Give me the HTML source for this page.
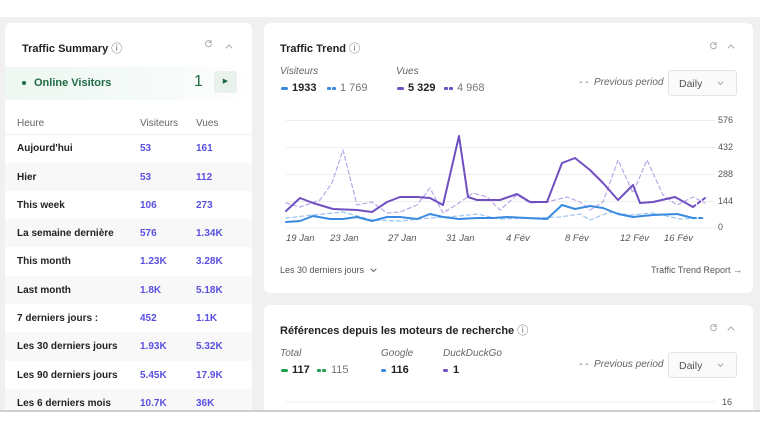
<!DOCTYPE html>
<html><head><meta charset="utf-8"><style>
*{box-sizing:border-box;margin:0;padding:0}
body{width:760px;height:427px;overflow:hidden;background:#fff;font-family:"Liberation Sans",sans-serif;position:relative}
.bg{position:absolute;left:0;top:17px;width:760px;height:393px;background:#f0f0f0;overflow:hidden}
.bl{position:absolute;left:0;top:410px;width:760px;height:2px;background:#cfcfcf}
.card{position:absolute;background:#fff;border-radius:6px}
.t{position:absolute;white-space:nowrap}
.h{font-size:11px;font-weight:bold;color:#222}
.row{position:absolute;left:0;width:247px;height:28.3px;font-size:10px;font-weight:bold;color:#222}
.row.g{background:#f8f8f8}
.row span{position:absolute;top:9px}
.row .v{color:#5a50e0;left:135px}
.row .w{color:#5a50e0;left:191px}
.row .l{left:12px}
.it{font-style:italic;color:#666;font-size:10px}
.dd{position:absolute;width:69px;height:26px;border:1px solid #e4e4e4;border-radius:3px;background:#fafafa;font-size:10.5px;color:#555;padding:7px 0 0 10px}
.ax{position:absolute;font-size:9px;color:#555}
.xl{position:absolute;font-size:9.5px;font-style:italic;color:#555;top:233px}
.dm{position:absolute;height:3px;width:4px;border-radius:1px}
svg{z-index:2}
</style></head><body>
<div class="bg">
 <div class="card" style="left:5px;top:6px;width:247px;height:420px;overflow:hidden">
  <div class="t h" style="left:17px;top:17px">Traffic Summary <span style="font-weight:normal;color:#666">ⓘ</span></div>
  <div style="position:absolute;left:0;top:44px;width:247px;height:33px;background:linear-gradient(90deg,#eef7f2,#f7fbf9 70%,#fff)"></div>
  <div style="position:absolute;left:17px;top:58px;width:4px;height:4px;border-radius:50%;background:#1e6b45"></div>
  <div class="t" style="left:29px;top:54px;font-size:11px;color:#1e6b45;font-weight:bold">Online Visitors</div>
  <div class="t" style="left:189px;top:50px;font-size:16px;color:#1e6b45">1</div>
  <div style="position:absolute;left:209px;top:48px;width:23px;height:22px;border-radius:3px;background:#e8f1ec;color:#1e6b45;font-size:7px;text-align:center;padding-top:6px">▶</div>
  <div class="row" style="top:84px;color:#666;font-weight:normal;border-bottom:1px solid #f0f0f0"><span class="l" style="top:11px">Heure</span><span style="left:135px;top:11px">Visiteurs</span><span style="left:191px;top:11px">Vues</span></div>
  <div class="row" style="top:111px"><span class="l">Aujourd'hui</span><span class="v">53</span><span class="w">161</span></div>
  <div class="row g" style="top:139.5px"><span class="l">Hier</span><span class="v">53</span><span class="w">112</span></div>
  <div class="row" style="top:167.8px"><span class="l">This week</span><span class="v">106</span><span class="w">273</span></div>
  <div class="row g" style="top:196px"><span class="l">La semaine dernière</span><span class="v">576</span><span class="w">1.34K</span></div>
  <div class="row" style="top:224.4px"><span class="l">This month</span><span class="v">1.23K</span><span class="w">3.28K</span></div>
  <div class="row g" style="top:252.7px"><span class="l">Last month</span><span class="v">1.8K</span><span class="w">5.18K</span></div>
  <div class="row" style="top:281px"><span class="l">7 derniers jours :</span><span class="v">452</span><span class="w">1.1K</span></div>
  <div class="row g" style="top:309.3px"><span class="l">Les 30 derniers jours</span><span class="v">1.93K</span><span class="w">5.32K</span></div>
  <div class="row" style="top:337.6px"><span class="l">Les 90 derniers jours</span><span class="v">5.45K</span><span class="w">17.9K</span></div>
  <div class="row g" style="top:366px"><span class="l">Les 6 derniers mois</span><span class="v">10.7K</span><span class="w">36K</span></div>
 </div>
 <div class="card" style="left:264px;top:6px;width:489px;height:270px"></div>
 <div class="card" style="left:264px;top:288px;width:489px;height:130px"></div>
</div>
<div class="t h" style="left:280px;top:40px">Traffic Trend <span style="font-weight:normal;color:#666">ⓘ</span></div>
<div class="t it" style="left:280px;top:66px">Visiteurs</div>
<div class="t it" style="left:396px;top:66px">Vues</div>
<div style="position:absolute;left:281px;top:87px;width:7px;height:3px;border-radius:2px;background:#3a8be0"></div>
<div class="t" style="left:292px;top:82px;font-size:11px;font-weight:bold;color:#222">1933</div>
<div class="dm" style="left:327px;top:87px;background:#3a8be0"></div><div class="dm" style="left:332px;top:87px;background:#3a8be0"></div>
<div class="t" style="left:340px;top:82px;font-size:11px;color:#777">1 769</div>
<div style="position:absolute;left:397px;top:87px;width:7px;height:3px;border-radius:2px;background:#7050c0"></div>
<div class="t" style="left:408px;top:82px;font-size:11px;font-weight:bold;color:#222">5 329</div>
<div class="dm" style="left:444px;top:87px;background:#7050c0"></div><div class="dm" style="left:449px;top:87px;background:#7050c0"></div>
<div class="t" style="left:457px;top:82px;font-size:11px;color:#777">4 968</div>
<div class="t it" style="left:579px;top:77px">- - &nbsp;Previous period</div>
<div class="dd" style="left:668px;top:70px">Daily</div>
<div class="t" style="left:280px;top:265px;font-size:9px;color:#555">Les 30 derniers jours</div>
<div class="t" style="left:651px;top:265px;font-size:9px;color:#555">Traffic Trend Report →</div>
<div class="t h" style="left:280px;top:322px">Références depuis les moteurs de recherche <span style="font-weight:normal;color:#666">ⓘ</span></div>
<div class="t it" style="left:280px;top:348px">Total</div>
<div class="t it" style="left:381px;top:348px">Google</div>
<div class="t it" style="left:443px;top:348px">DuckDuckGo</div>
<div style="position:absolute;left:281px;top:369px;width:7px;height:3px;border-radius:2px;background:#20a050"></div>
<div class="t" style="left:292px;top:364px;font-size:11px;font-weight:bold;color:#222">117</div>
<div class="dm" style="left:317px;top:369px;background:#20a050"></div><div class="dm" style="left:322px;top:369px;background:#20a050"></div>
<div class="t" style="left:331px;top:364px;font-size:11px;color:#777">115</div>
<div style="position:absolute;left:381px;top:369px;width:5px;height:3px;border-radius:2px;background:#3a8be0"></div>
<div class="t" style="left:391px;top:364px;font-size:11px;font-weight:bold;color:#222">116</div>
<div style="position:absolute;left:443px;top:369px;width:5px;height:3px;border-radius:2px;background:#7050c0"></div>
<div class="t" style="left:453px;top:364px;font-size:11px;font-weight:bold;color:#222">1</div>
<div class="t it" style="left:579px;top:359px">- - &nbsp;Previous period</div>
<div class="dd" style="left:668px;top:352px">Daily</div>
<svg style="position:absolute;left:0;top:0" width="760" height="427">
<g fill="none" stroke="#aaa" stroke-width="1" stroke-linecap="round">
<path d="M211.5 44 a3 3 0 1 1 -0.5 -2 M211 40.5 v2 h-2"/><path d="M226 48 l3 -3 l3 3"/>
<path d="M716.5 46 a3 3 0 1 1 -0.5 -2 M716 42.5 v2 h-2"/><path d="M728 48 l3 -3 l3 3"/>
<path d="M716.5 328 a3 3 0 1 1 -0.5 -2 M716 324.5 v2 h-2"/><path d="M728 330 l3 -3 l3 3"/>
<path d="M718 82 l2.5 2.5 l2.5 -2.5"/><path d="M718 364 l2.5 2.5 l2.5 -2.5"/>
<path d="M371 269 l2.5 2.5 l2.5 -2.5" stroke="#666"/>
</g>
<g stroke="#eee" stroke-width="1"><line x1="286" y1="120.5" x2="715" y2="120.5"/><line x1="286" y1="147.5" x2="715" y2="147.5"/><line x1="286" y1="174.5" x2="715" y2="174.5"/><line x1="286" y1="201.5" x2="715" y2="201.5"/><line x1="286" y1="228" x2="715" y2="228"/><line x1="286" y1="402" x2="715" y2="402"/></g>
<g fill="none" stroke-linejoin="round" stroke-linecap="round">
<polyline stroke="#b8a8e8" stroke-width="1.2" stroke-dasharray="4 3" points="286,203 300,207 320,200 332,183 343,150 357,205 372,202 387,213 400,212 417,205 430,188 443,213 459,203 473,193 487,197 500,210 517,195 530,203 547,202 567,197 580,202 590,210 603,202 618,160 633,193 647,160 663,195 677,205 693,197 705,203"/>
<polyline stroke="#9cc6f0" stroke-width="1.2" stroke-dasharray="4 3" points="286,218 313,215 343,212 372,220 400,221 430,218 459,216 477,214 500,219 530,218 560,217 580,214 590,220 610,212 630,215 653,213 680,219 705,218"/>
<polyline stroke="#7050c0" stroke-width="2" points="286,211 300,198 313,203 333,209 357,210 372,212 387,202 400,197 417,197 430,198 443,205 459,136 468,197 477,200 500,200 517,194 530,202 547,202 562,163 575,158 590,170 603,183 618,200 633,185 640,203 653,202 675,197 693,207"/>
<polyline stroke="#7050c0" stroke-width="2" stroke-dasharray="3 3" points="693,207 705,198"/>
<polyline stroke="#3a8be0" stroke-width="2" points="286,222 300,221 313,216 330,219 343,219 357,217 372,221 387,217 400,217 417,219 430,214 443,217 459,219 477,218 493,218 507,217 527,218 547,219 562,205 575,209 590,206 603,208 618,214 633,217 653,215 677,214 693,218"/>
<polyline stroke="#3a8be0" stroke-width="2" stroke-dasharray="3 3" points="693,218 705,218"/>
</g></svg>
<div class="ax" style="left:718px;top:115px">576</div>
<div class="ax" style="left:718px;top:142px">432</div>
<div class="ax" style="left:718px;top:169px">288</div>
<div class="ax" style="left:718px;top:196px">144</div>
<div class="ax" style="left:718px;top:222px">0</div>
<div class="xl" style="left:286px">19 Jan</div><div class="xl" style="left:330px">23 Jan</div><div class="xl" style="left:388px">27 Jan</div><div class="xl" style="left:446px">31 Jan</div><div class="xl" style="left:506px">4 Fév</div><div class="xl" style="left:565px">8 Fév</div><div class="xl" style="left:620px">12 Fév</div><div class="xl" style="left:664px">16 Fév</div>
<div class="ax" style="left:722px;top:397px">16</div>
<div class="bl"></div>
</body></html>
